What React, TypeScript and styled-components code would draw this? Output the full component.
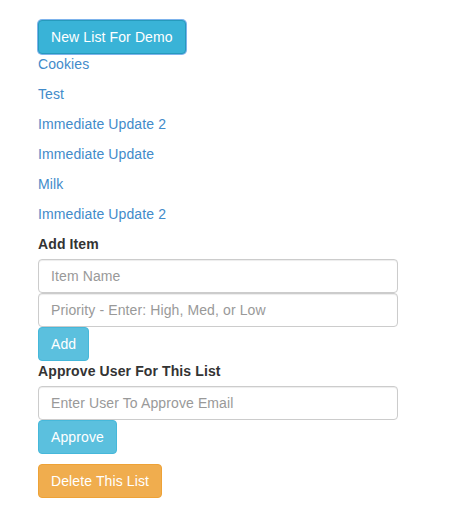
import React from "react";
import styled, { createGlobalStyle, css } from "styled-components";

const Global = createGlobalStyle`
  html, body { margin: 0; padding: 0; background: #fff; }
  body {
    font-family: "Liberation Sans", Arial, Helvetica, sans-serif;
    font-size: 14px;
    line-height: 20px;
    color: #333;
    letter-spacing: 0.11px;
  }
  * { box-sizing: border-box; }
`;

const Page = styled.div`
  padding: 20px 38px;
  width: 398px;
  display: flex;
  flex-direction: column;
  align-items: flex-start;
`;

type Variant = "info" | "infoFocus" | "warning";

const variants = {
  info: css`
    background: #5bc0de;
    border-color: #46b8da;
  `,
  infoFocus: css`
    background: #39b3d7;
    border-color: #269abc;
    box-shadow: 0 0 0 1px #7db3ec;
  `,
  warning: css`
    background: #f0ad4e;
    border-color: #eea236;
  `,
};

const Button = styled.button<{ $variant: Variant; $mt?: number }>`
  font-family: inherit;
  font-size: 14px;
  line-height: 20px;
  letter-spacing: inherit;
  padding: 6px 12px;
  border: 1px solid transparent;
  border-radius: 4px;
  color: #fff;
  cursor: pointer;
  margin-top: ${(p) => p.$mt ?? 0}px;
  ${(p) => variants[p.$variant]}
`;

const ListLink = styled.a`
  display: block;
  color: #428bca;
  text-decoration: none;
  line-height: 20px;
  & + & { margin-top: 10px; }
`;

const Links = styled.div`
  display: flex;
  flex-direction: column;
`;

const Label = styled.label<{ $mt?: number }>`
  display: block;
  font-weight: bold;
  line-height: 20px;
  margin-top: ${(p) => p.$mt ?? 0}px;
  margin-bottom: 5px;
`;

const Input = styled.input`
  display: block;
  width: 360px;
  height: 34px;
  padding: 6px 12px;
  font-family: inherit;
  font-size: 14px;
  line-height: 20px;
  letter-spacing: inherit;
  color: #555;
  background: #fff;
  border: 1px solid #ccc;
  border-radius: 4px;
  box-shadow: inset 0 1px 1px rgba(0, 0, 0, 0.075);
  outline: none;
  &::placeholder { color: #999; }
`;

const lists = [
  "Cookies",
  "Test",
  "Immediate Update 2",
  "Immediate Update",
  "Milk",
  "Immediate Update 2",
];

export default function App() {
  return (
    <>
      <Global />
      <Page>
        <Button $variant="infoFocus">New List For Demo</Button>
        <Links>
          {lists.map((l, i) => (
            <ListLink key={i} href="#">{l}</ListLink>
          ))}
        </Links>
        <Label $mt={10}>Add Item</Label>
        <Input placeholder="Item Name" />
        <Input placeholder="Priority - Enter: High, Med, or Low" />
        <Button $variant="info">Add</Button>
        <Label>Approve User For This List</Label>
        <Input placeholder="Enter User To Approve Email" />
        <Button $variant="info">Approve</Button>
        <Button $variant="warning" $mt={10}>Delete This List</Button>
      </Page>
    </>
  );
}
